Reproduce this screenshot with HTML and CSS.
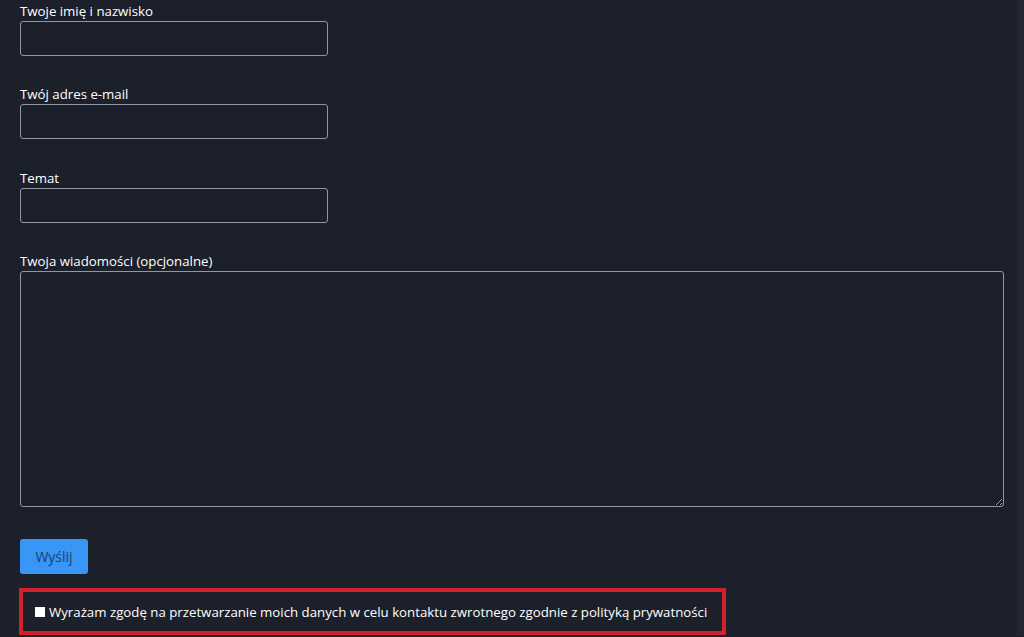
FILE: index.html
```html
<!DOCTYPE html>
<html lang="pl">
<head>
    <meta charset="UTF-8">
    <meta name="viewport" content="width=device-width, initial-scale=1.0">
    <title>Kontakt</title>
    <link rel="stylesheet" href="styles.css">
</head>
<body>
    <div class="page">
        <form class="contact-form">
            <div class="field">
                <label for="name">Twoje imię i nazwisko</label>
                <input type="text" id="name">
            </div>

            <div class="field">
                <label for="email">Twój adres e-mail</label>
                <input type="email" id="email">
            </div>

            <div class="field">
                <label for="subject">Temat</label>
                <input type="text" id="subject">
            </div>

            <div class="field">
                <label for="message">Twoja wiadomości (opcjonalne)</label>
                <textarea id="message"></textarea>
            </div>

            <button type="button" class="submit">Wyślij</button>

            <div class="consent">
                <input type="checkbox" id="consent">
                <label for="consent">Wyrażam zgodę na przetwarzanie moich danych w celu kontaktu zwrotnego zgodnie z polityką prywatności</label>
            </div>
        </form>
    </div>
</body>
</html>
```

FILE: styles.css
```css
html, body {
    margin: 0;
    padding: 0;
    background-color: #1c202b;
}

body {
    font-family: "Open Sans", "Noto Sans", sans-serif;
    font-size: 13.25px;
    color: #ffffff;
}

.page {
    padding: 1px 20px 0 20px;
    border-left: 3px solid #181b24;
    border-right: 7px solid #22262f;
    min-height: 636px;
    box-sizing: border-box;
    margin-left: -3px;
}

.field {
    margin-bottom: 28px;
}

.field:nth-child(2) {
    margin-bottom: 29px;
}

.field label {
    display: block;
    line-height: 20px;
    color: #ffffff;
}

.field input,
.field textarea {
    display: block;
    width: 308px;
    height: 35px;
    margin: 0;
    padding: 4px 8px;
    background-color: #1c202b;
    border: 1px solid #9096a3;
    border-radius: 3px;
    box-sizing: border-box;
    color: #ffffff;
    font-family: inherit;
}

.field textarea {
    width: 984px;
    height: 236px;
    resize: vertical;
}

.field:nth-child(4) {
    margin-bottom: 32px;
}

.submit {
    display: block;
    width: 68px;
    height: 35px;
    padding: 0;
    background-color: #3796f6;
    color: #1b3f75;
    border: none;
    border-radius: 3px;
    font-family: inherit;
    font-size: 14px;
    cursor: pointer;
}

.consent {
    display: flex;
    align-items: center;
    gap: 4px;
    width: 707px;
    height: 47px;
    margin-top: 14px;
    margin-left: -1px;
    padding-left: 12px;
    border: 4px solid #d4202c;
    box-sizing: border-box;
}

.consent input {
    width: 10px;
    height: 10px;
    margin: 0;
    appearance: none;
    background-color: #ffffff;
    border-radius: 0;
}

.consent label {
    line-height: 20px;
    color: #ffffff;
}
```
